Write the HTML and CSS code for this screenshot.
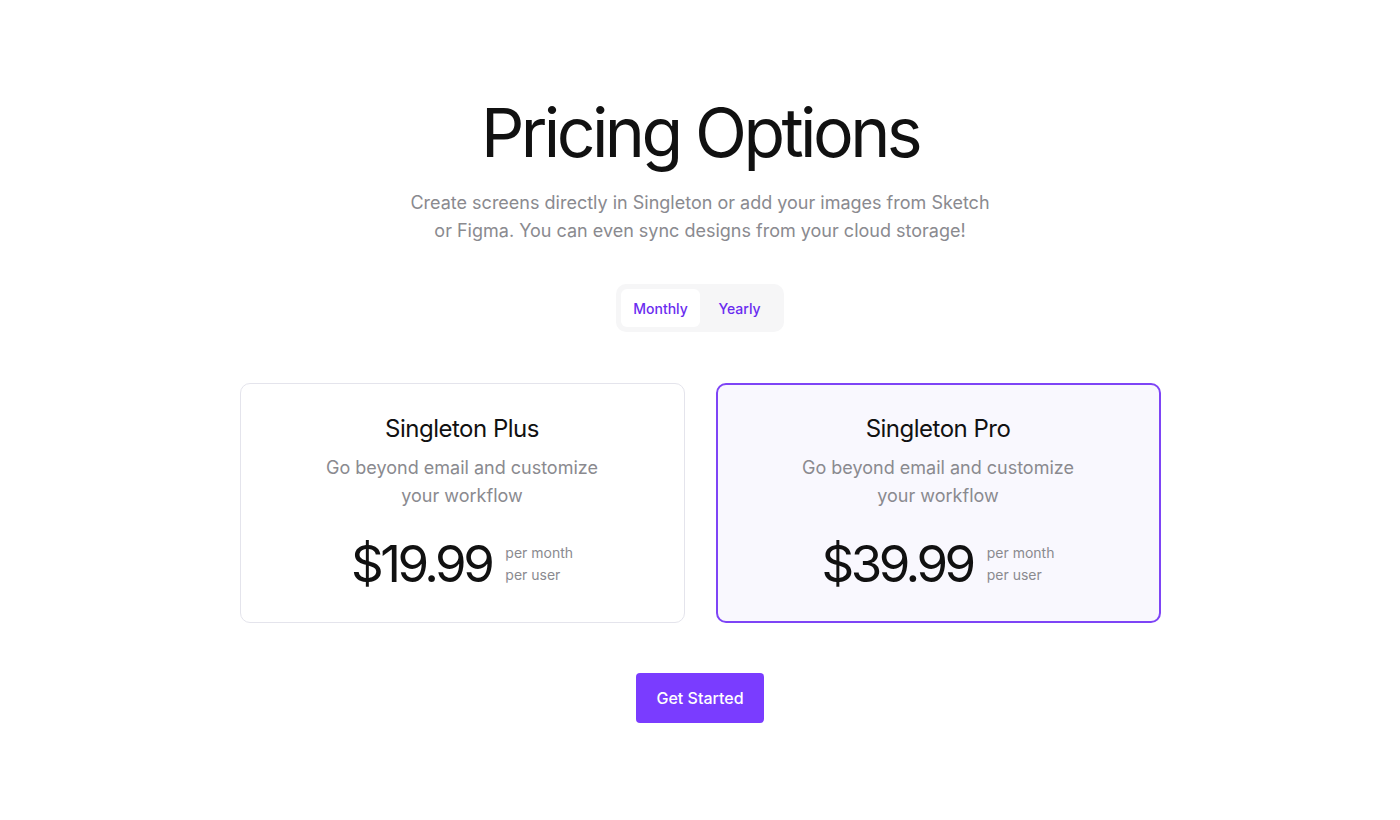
FILE: index.html
```html
<!DOCTYPE html>
<html lang="en">
<head>
<meta charset="utf-8">
<title>Pricing Options</title>
<link rel="stylesheet" href="styles.css">
</head>
<body>
<main class="page">
  <h1 class="title">Pricing Options</h1>
  <p class="subtitle">Create screens directly in Singleton or add your images from Sketch<br>or Figma. You can even sync designs from your cloud storage!</p>
  <div class="toggle">
    <button class="toggle-btn active">Monthly</button>
    <button class="toggle-btn">Yearly</button>
  </div>
  <section class="cards">
    <article class="card">
      <h2 class="card-title">Singleton Plus</h2>
      <p class="card-desc">Go beyond email and customize<br>your workflow</p>
      <div class="price-row">
        <span class="price">$19.99</span>
        <span class="per">per month<br>per user</span>
      </div>
    </article>
    <article class="card selected">
      <h2 class="card-title">Singleton Pro</h2>
      <p class="card-desc">Go beyond email and customize<br>your workflow</p>
      <div class="price-row">
        <span class="price">$39.99</span>
        <span class="per">per month<br>per user</span>
      </div>
    </article>
  </section>
  <button class="cta">Get Started</button>
</main>
</body>
</html>
```

FILE: styles.css
```css
* { box-sizing: border-box; }
html, body { margin: 0; padding: 0; background: #ffffff; }
body {
  font-family: "Inter", "Open Sans", sans-serif;
  color: #111111;
}
.page {
  display: flex;
  flex-direction: column;
  align-items: center;
  padding-top: 89px;
}
.title {
  margin: 0;
  font-size: 68px;
  line-height: 86px;
  font-weight: 400;
  letter-spacing: -3.6px;
  color: #111111;
}
.subtitle {
  margin: 14px 0 0;
  font-size: 18px;
  line-height: 28px;
  text-align: center;
  color: #8a8a8f;
  font-weight: 400;
}
.toggle {
  margin-top: 39px;
  display: flex;
  gap: 0;
  padding: 5px;
  background: #f6f6f7;
  border-radius: 10px;
  height: 48px;
}
.toggle-btn {
  border: none;
  background: transparent;
  font-family: inherit;
  font-size: 14px;
  font-weight: 500;
  color: #6a2cf0;
  height: 38px;
  padding: 0;
  border-radius: 6px;
  cursor: pointer;
}
.toggle-btn.active {
  background: #ffffff;
  width: 79px;
}
.toggle-btn:not(.active) { width: 79px; }
.cards {
  margin-top: 51px;
  display: flex;
  gap: 31px;
}
.card {
  width: 445px;
  height: 240px;
  border: 1px solid #e4e4ec;
  border-radius: 10px;
  background: #ffffff;
  display: flex;
  flex-direction: column;
  align-items: center;
  padding-top: 29px;
}
.card.selected {
  border: 2px solid #7e44f6;
  background: #f9f8fe;
  padding-top: 28px;
}
.card-title {
  margin: 0;
  font-size: 24px;
  line-height: 32px;
  font-weight: 400;
  letter-spacing: -0.5px;
  color: #111111;
}
.card-desc {
  margin: 9px 0 0;
  font-size: 18px;
  line-height: 28px;
  text-align: center;
  color: #8a8a8f;
}
.price-row {
  margin-top: 22px;
  display: flex;
  align-items: center;
  gap: 14px;
}
.price {
  font-size: 51px;
  line-height: 64px;
  font-weight: 400;
  letter-spacing: -3.5px;
  color: #111111;
}
.per {
  font-size: 14px;
  line-height: 22px;
  color: #8a8a8f;
  margin-top: 0;
}
.cta {
  margin-top: 50px;
  width: 128px;
  height: 50px;
  border: none;
  border-radius: 4px;
  background: #7a3cff;
  color: #ffffff;
  font-family: inherit;
  font-size: 16px;
  font-weight: 500;
  cursor: pointer;
}
```
